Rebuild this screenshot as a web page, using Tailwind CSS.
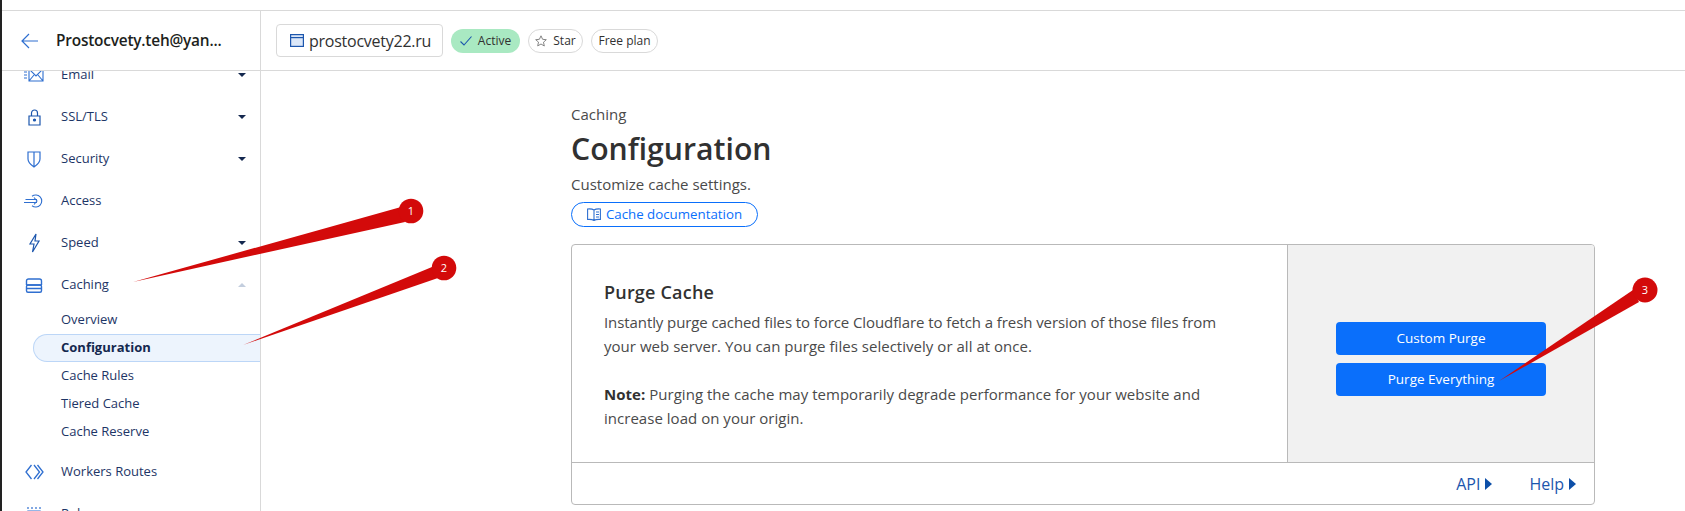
<!DOCTYPE html>
<html lang="en">
<head>
	<meta charset="UTF-8">
	<title>Caching Configuration</title>
	<script src="https://cdn.jsdelivr.net/npm/@tailwindcss/browser@4"></script>
</head>
<body class="bg-white h-[511px] overflow-hidden font-['Open_Sans','Noto_Sans',sans-serif] text-[#313131]">
<div class="relative h-[511px] border-l-2 border-[#222] pt-[10px]">

	<!-- top bar -->
	<div class="flex h-[61px] border-y border-[#d9d9d9]">
		<div class="flex w-[259px] shrink-0 items-center gap-[18px] border-r border-[#d9d9d9] pl-[19px]">
			<svg class="h-4 w-[17px] text-[#2f6fd0]" viewBox="0 0 17 16" fill="none" stroke="currentColor" stroke-width="1.2"><path d="M17 8H1M8 1 1 8l7 7"/></svg>
			<span class="text-[15.4px] font-semibold tracking-[-0.2px] text-[#1d1f20]">Prostocvety.teh@yan...</span>
		</div>
		<div class="flex items-center pl-[15px]">
			<div class="flex h-[33px] w-[167px] items-center gap-[5px] rounded border border-[#d9d9d9] pl-[13px]">
				<svg class="h-[13px] w-[14px]" viewBox="0 0 14 13" fill="#dbe7f8" stroke="#1c56ad" stroke-width="1.2"><rect x=".6" y=".6" width="12.8" height="11.8"/><path d="M.6 3.600h12.800"/></svg>
				<span class="text-[16px] tracking-[-0.25px]">prostocvety22.ru</span>
			</div>
			<div class="ml-2 flex h-6 w-[69px] items-center justify-center gap-[6px] rounded-full bg-[#a9e9c2] text-[12px]">
				<svg class="h-[10px] w-3" viewBox="0 0 12 10" fill="none" stroke="#1c56ad" stroke-width="1.1"><path d="M.5 5.500 4 9l7.500-8.500"/></svg>
				Active
			</div>
			<div class="ml-2 flex h-6 w-[55px] items-center justify-center gap-[6px] rounded-full border border-[#d9d9d9] text-[12px]">
				<svg class="h-3 w-3" viewBox="0 0 12 12" fill="none" stroke="#777" stroke-width=".9"><path d="m6 .8 1.600 3.500 3.700.4-2.800 2.500.8 3.800L6 9l-3.300 1.900.8-3.800L.7 4.700l3.700-.4z"/></svg>
				Star
			</div>
			<div class="ml-2 flex h-6 w-[67px] items-center justify-center rounded-full border border-[#d9d9d9] text-[12px]">Free plan</div>
		</div>
	</div>

	<div class="flex h-[440px]">
		<!-- sidebar -->
		<div class="relative w-[259px] shrink-0 overflow-hidden border-r border-[#d9d9d9] text-[13px] text-[#1d3566]">
			<div class="-mt-[17px]">
				<div class="flex h-[42px] items-center pl-[22px]">
					<svg class="h-[14px] w-5 text-[#2f6fd0]" viewBox="0 0 20 14" fill="none" stroke="currentColor" stroke-width="1.1"><path d="M5 1h14v12H5zM5 1l7 7 7-7M5 13l5-6M19 13l-5-6M0 4h3M0 7h3M0 10h3"/></svg>
					<span class="ml-[17px] flex-1">Email</span>
					<span class="mr-[14px] border-x-[4px] border-t-[4px] border-x-transparent border-t-[#14284f]"></span>
				</div>
				<div class="flex h-[42px] items-center pl-[22px]">
					<svg class="h-[17px] w-5 text-[#1c56ad]" viewBox="0 0 20 17" fill="none" stroke="currentColor" stroke-width="1.2"><path d="M5 7h11v9H5zM7.500 7V4a3 3 0 0 1 6 0v3"/><circle cx="10.500" cy="11" r="1" fill="currentColor"/></svg>
					<span class="ml-[17px] flex-1">SSL/TLS</span>
					<span class="mr-[14px] border-x-[4px] border-t-[4px] border-x-transparent border-t-[#14284f]"></span>
				</div>
				<div class="flex h-[42px] items-center pl-[22px]">
					<svg class="h-[17px] w-5 text-[#2f6fd0]" viewBox="0 0 20 17" fill="none" stroke="currentColor" stroke-width="1.2"><path d="M4 1h12v7c0 4-3 6-6 8-3-2-6-4-6-8zM10 1v15"/></svg>
					<span class="ml-[17px] flex-1">Security</span>
					<span class="mr-[14px] border-x-[4px] border-t-[4px] border-x-transparent border-t-[#14284f]"></span>
				</div>
				<div class="flex h-[42px] items-center pl-[22px]">
					<svg class="h-[14px] w-5 text-[#2f6fd0]" viewBox="0 0 20 14" fill="none" stroke="currentColor" stroke-width="1.1"><path d="M8 2.300a6 6 0 1 1 0 9.400M1.500 5.500H13M0 8.500h13M10 3.500l3 3.500-3 3.500"/></svg>
					<span class="ml-[17px] flex-1">Access</span>
				</div>
				<div class="flex h-[42px] items-center pl-[22px]">
					<svg class="h-5 w-5 text-[#1c56ad]" viewBox="0 0 20 20" fill="none" stroke="currentColor" stroke-width="1.2"><path d="M12 1 6 11h4l-1.500 8L15 8h-4z"/></svg>
					<span class="ml-[17px] flex-1">Speed</span>
					<span class="mr-[14px] border-x-[4px] border-t-[4px] border-x-transparent border-t-[#14284f]"></span>
				</div>
				<div class="flex h-[42px] items-center pl-[22px]">
					<svg class="h-[15px] w-5 text-[#2f6fd0]" viewBox="0 0 20 15" fill="none" stroke="currentColor" stroke-width="1.4"><path d="M2.500 7V3a2 2 0 0 1 2-2h11a2 2 0 0 1 2 2v4"/><rect x="2.500" y="7" width="15" height="7.300" rx="1.500"/><path d="M2.500 7h15M2.500 10.500h15"/></svg>
					<span class="ml-[17px] flex-1">Caching</span>
					<span class="mr-[14px] border-x-[4px] border-b-[4px] border-x-transparent border-b-[#c3cede]"></span>
				</div>
				<div class="flex h-7 items-center pl-[59px]">Overview</div>
				<div class="ml-[31px] flex h-7 items-center rounded-l-full border border-r-0 border-[#bcd6f7] bg-[#edf4fd] pl-[27px] font-bold text-[#14284f]">Configuration</div>
				<div class="flex h-7 items-center pl-[59px]">Cache Rules</div>
				<div class="flex h-7 items-center pl-[59px]">Tiered Cache</div>
				<div class="flex h-7 items-center pl-[59px]">Cache Reserve</div>
				<div class="mt-[5px] flex h-[42px] items-center pl-[22px]">
					<svg class="h-4 w-5 text-[#2f6fd0]" viewBox="0 0 20 16" fill="none" stroke="currentColor" stroke-width="1.3"><path d="M7.500 1 2 8l5.500 7M10 1l5.500 7-5.500 7M13.500 1 19 8l-5.500 7"/></svg>
					<span class="ml-[17px] flex-1">Workers Routes</span>
				</div>
				<div class="flex h-[42px] items-center pl-[22px]">
					<svg class="h-4 w-5 text-[#2f6fd0]" viewBox="0 0 20 16" fill="none" stroke="currentColor" stroke-width="1.2"><path d="M4 5h12l-2 7H6zM4 1v2M8 1v2M12 1v2M16 1v2"/></svg>
					<span class="ml-[17px] flex-1">Rules</span>
					<span class="mr-[14px] border-x-[4px] border-t-[4px] border-x-transparent border-t-[#14284f]"></span>
				</div>
			</div>
		</div>

		<!-- main -->
		<div class="flex-1 pl-[310px] pt-[32px]">
			<p class="text-[15px] leading-[22px] text-[#4a4a4a]">Caching</p>
			<h1 class="text-[30.2px] leading-[47px] font-semibold">Configuration</h1>
			<p class="text-[15px] leading-[24px] text-[#4a4a4a]">Customize cache settings.</p>
			<div class="mt-[6px] flex h-[25px] w-[187px] items-center justify-center gap-[5px] rounded-full border border-[#0a6ffb] text-[13.3px] text-[#0a6ffb]">
				<svg class="h-[13px] w-[14px]" viewBox="0 0 14 13" fill="none" stroke="#2f6fd0" stroke-width="1.1"><path d="M7 2C5.500 1 3 .8.600 1v10.500c2.400-.2 4.900 0 6.400 1 1.500-1 4-1.200 6.400-1V1C11 .8 8.500 1 7 2zM7 2v10.500M9 4h3M9 6.500h3M9 9h3"/></svg>
				Cache documentation
			</div>

			<!-- purge card -->
			<div class="mt-[17px] w-[1024px] overflow-hidden rounded border border-[#b9b9b9]">
				<div class="flex h-[218px] border-b border-[#b9b9b9]">
					<div class="w-[716px] border-r border-[#b9b9b9] pl-[32px] pt-[34px]">
						<h2 class="text-[18px] leading-[26px] font-semibold tracking-[0.2px]">Purge Cache</h2>
						<p class="mt-[5px] text-[15px] leading-[24px] tracking-[0.03px] text-[#4a4a4a]"><span class="tracking-[-0.09px]">Instantly purge cached files to force Cloudflare to fetch a fresh version of those files from</span><br>your web server. You can purge files selectively or all at once.</p>
						<p class="mt-[24px] text-[15px] leading-[24px] tracking-[0.03px] text-[#4a4a4a]"><b class="font-bold text-[#313131]">Note:</b> Purging the cache may temporarily degrade performance for your website and<br>increase load on your origin.</p>
					</div>
					<div class="flex flex-1 flex-col items-center justify-center gap-2 bg-[#f1f1f1] pt-[10px]">
						<button class="h-[33px] w-[210px] rounded bg-[#0a6ffb] text-[13.5px] text-white">Custom Purge</button>
						<button class="h-[33px] w-[210px] rounded bg-[#0a6ffb] text-[13.5px] text-white">Purge Everything</button>
					</div>
				</div>
				<div class="flex h-[41px] items-center justify-end gap-[37px] pr-[18px] text-[16px] text-[#1c56ad]">
					<span class="flex items-center gap-[5px]">API <span class="border-y-[6px] border-l-[7px] border-y-transparent border-l-[#0d4fa8]"></span></span>
					<span class="flex items-center gap-[5px]">Help <span class="border-y-[6px] border-l-[7px] border-y-transparent border-l-[#0d4fa8]"></span></span>
				</div>
			</div>
		</div>
	</div>

	<!-- numbered red arrows laid over the screenshot -->
	<svg class="absolute top-0 -left-[2px] h-[511px] w-[1685px]" viewBox="0 0 1685 511">
		<path d="M133 282 401 207l4 15z" fill="#d30a0a"/>
		<circle cx="411" cy="211" r="12.300" fill="#d30a0a"/>
		<path d="M243 345 432 267l6 11z" fill="#d30a0a"/>
		<circle cx="444" cy="268" r="12.300" fill="#d30a0a"/>
		<path d="M1499 381 1633 290l6 12z" fill="#d30a0a"/>
		<circle cx="1645" cy="290" r="12.500" fill="#d30a0a"/>
		<text x="411" y="215" font-size="11" fill="#fff" text-anchor="middle">1</text>
		<text x="444" y="272" font-size="11" fill="#fff" text-anchor="middle">2</text>
		<text x="1645" y="294" font-size="11" fill="#fff" text-anchor="middle">3</text>
	</svg>
</div>
</body>
</html>
